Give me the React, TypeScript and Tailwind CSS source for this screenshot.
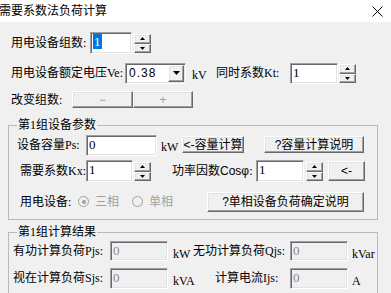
import React from 'react';

const sunken = 'border border-t-[#a0a0a0] border-l-[#a0a0a0] border-r-white border-b-white shadow-[inset_1px_1px_0_#696969,inset_-1px_-1px_0_#e3e3e3]';
const raised = 'border border-t-white border-l-white border-r-[#696969] border-b-[#696969] shadow-[inset_-1px_-1px_0_#a0a0a0,inset_1px_1px_0_#e3e3e3] bg-[#f0f0f0]';
const serif = { fontFamily: '"Liberation Serif", "Noto Sans CJK SC", serif' };
const sans = { fontFamily: '"Liberation Sans", "Noto Sans CJK SC", sans-serif' };

function Edit({ w, h, value, disabled, selected }: { w: string; h: string; value: string; disabled?: boolean; selected?: boolean }) {
    return (
        <div className={`${w} ${h} ${sunken} ${disabled ? 'bg-[#f0f0f0] text-[#8a8a8a]' : 'bg-white text-black'} pl-[2px] pt-[2px] text-[13px] leading-[14px] shrink-0`} style={serif}>
            <span className={selected ? 'bg-[#0078d7] text-white px-[1px]' : ''}>{value}</span>
        </div>
    );
}

function Spin() {
    return (
        <div className="flex flex-col w-[17px] h-[19px] shrink-0">
            <div className={`${raised} h-[10px] flex items-center justify-center`}>
                <svg width="5" height="3" viewBox="0 0 5 3"><path d="M2.5 0 L5 3 L0 3 Z" fill="#000" /></svg>
            </div>
            <div className={`${raised} h-[9px] flex items-center justify-center`}>
                <svg width="5" height="3" viewBox="0 0 5 3"><path d="M0 0 L5 0 L2.5 3 Z" fill="#000" /></svg>
            </div>
        </div>
    );
}

function Btn({ w, h, children, className = '' }: { w: string; h: string; children: React.ReactNode; className?: string }) {
    return (
        <div className={`${w} ${h} ${raised} flex items-center justify-center text-[12px] leading-none shrink-0 ${className}`} style={sans}>
            {children}
        </div>
    );
}

function Radio({ checked, label }: { checked?: boolean; label: string }) {
    return (
        <div className="flex items-center text-[12px] text-[#a0a0a0]">
            <div className="w-[11px] h-[11px] rounded-full border border-[#a0a0a0] bg-[#f0f0f0] flex items-center justify-center shrink-0">
                {checked && <div className="w-[4px] h-[4px] rounded-full bg-[#a0a0a0]" />}
            </div>
            <span className="ml-[6px]" style={sans}>{label}</span>
        </div>
    );
}

export default function App() {
    return (
        <div className="w-[391px] h-[293px] overflow-hidden bg-[#f0f0f0] text-black text-[12px] leading-[14px] whitespace-nowrap" style={serif}>
            {/* title bar */}
            <div className="h-[22px] bg-white flex items-center justify-between">
                <span className="text-[12px] leading-[14px] -ml-[1px]" style={sans}>需要系数法负荷计算</span>
                <svg width="11" height="11" viewBox="0 0 11 11" className="mr-[8px]">
                    <path d="M0.5 0.5 L10.5 10.5 M10.5 0.5 L0.5 10.5" stroke="#000" strokeWidth="1" />
                </svg>
            </div>

            <div className="pt-[10px]">
                <div className="flex items-center h-[22px] pl-[11px]">
                    <span className="w-[79px] shrink-0">用电设备组数:</span>
                    <Edit w="w-[42px]" h="h-[22px]" value="1" selected />
                    <div className="ml-[2px]"><Spin /></div>
                </div>

                <div className="flex items-center h-[22px] pl-[11px] mt-[8px]">
                    <span className="w-[114px] shrink-0">用电设备额定电压Ve:</span>
                    <div className={`w-[61px] h-[21px] ${sunken} bg-white flex items-center justify-between shrink-0`}>
                        <span className="pl-[3px] text-[12px] tracking-[1px]" style={sans}>0.38</span>
                        <div className={`${raised} w-[16px] h-[17px] mr-[1px] flex items-center justify-center`}>
                            <svg width="7" height="4" viewBox="0 0 7 4"><path d="M0 0 L7 0 L3.5 4 Z" fill="#000" /></svg>
                        </div>
                    </div>
                    <span className="w-[30px] pl-[6px] pt-[3px] shrink-0">kV</span>
                    <span className="w-[74px] shrink-0">同时系数Kt:</span>
                    <Edit w="w-[48px]" h="h-[21px]" value="1" />
                    <div className="ml-[1px]"><Spin /></div>
                </div>

                <div className="flex items-center h-[17px] pl-[11px] mt-[7px]">
                    <span className="w-[61px] shrink-0">改变组数:</span>
                    <Btn w="w-[61px]" h="h-[17px]" className="text-[#a0a0a0]">−</Btn>
                    <Btn w="w-[60px]" h="h-[17px]" className="text-[#a0a0a0]">+</Btn>
                </div>

                {/* group 1 */}
                <fieldset className="ml-[8px] mr-[13px] mt-[10px] border border-[#b9b9b9] pl-[8px] pb-[7px]">
                    <legend className="text-[12px] leading-[14px] px-[1px]">第1组设备参数</legend>
                    <div className="flex items-start mt-[3px]">
                        <span className="w-[69px] pt-[3px] shrink-0">设备容量Ps:</span>
                        <Edit w="w-[71px]" h="h-[21px]" value="0" />
                        <span className="w-[25px] pl-[4px] pt-[5px] shrink-0">kW</span>
                        <Btn w="w-[62px]" h="h-[17px]" className="mt-[1px]">&lt;-容量计算</Btn>
                        <Btn w="w-[100px]" h="h-[17px]" className="mt-[1px] ml-[20px]">?容量计算说明</Btn>
                    </div>
                    <div className="flex items-center mt-[4px]">
                        <span className="w-[69px] pl-[3px] shrink-0">需要系数Kx:</span>
                        <Edit w="w-[47px]" h="h-[22px]" value="1" />
                        <div className="ml-[1px]"><Spin /></div>
                        <span className="w-[84px] ml-[21px] shrink-0">功率因数<span style={sans}>Cosφ</span>:</span>
                        <Edit w="w-[48px]" h="h-[22px]" value="1" />
                        <div className="ml-[2px]"><Spin /></div>
                        <Btn w="w-[37px]" h="h-[20px]" className="ml-[5px]">&lt;-</Btn>
                    </div>
                    <div className="flex items-center mt-[9px] h-[21px]">
                        <span className="w-[61px] pl-[3px] shrink-0">用电设备:</span>
                        <Radio checked label="三相" />
                        <div className="ml-[13px]"><Radio label="单相" /></div>
                        <Btn w="w-[157px]" h="h-[20px]" className="ml-[34px]">?单相设备负荷确定说明</Btn>
                    </div>
                </fieldset>

                {/* group 2 */}
                <fieldset className="ml-[8px] mr-[13px] mt-[5px] border border-[#b9b9b9] pl-[4px] pb-[5px]">
                    <legend className="text-[12px] leading-[14px] px-[1px] ml-[4px]">第1组计算结果</legend>
                    <div className="flex items-start mt-[2px]">
                        <span className="w-[97px] pt-[3px] shrink-0">有功计算负荷Pjs:</span>
                        <Edit w="w-[58px]" h="h-[20px]" value="0" disabled />
                        <span className="w-[25px] pl-[5px] pt-[6px] shrink-0">kW</span>
                        <span className="w-[97px] pt-[3px] shrink-0">无功计算负荷Qjs:</span>
                        <Edit w="w-[58px]" h="h-[20px]" value="0" disabled />
                        <span className="pl-[4px] pt-[6px] shrink-0">kVar</span>
                    </div>
                    <div className="flex items-start mt-[7px]">
                        <span className="w-[97px] pt-[3px] shrink-0">视在计算负荷Sjs:</span>
                        <Edit w="w-[58px]" h="h-[21px]" value="0" disabled />
                        <span className="w-[47px] pl-[5px] pt-[6px] shrink-0">kVA</span>
                        <span className="w-[75px] pt-[3px] shrink-0">计算电流Ijs:</span>
                        <Edit w="w-[58px]" h="h-[21px]" value="0" disabled />
                        <span className="pl-[4px] pt-[6px] shrink-0">A</span>
                    </div>
                </fieldset>
            </div>
        </div>
    );
}
